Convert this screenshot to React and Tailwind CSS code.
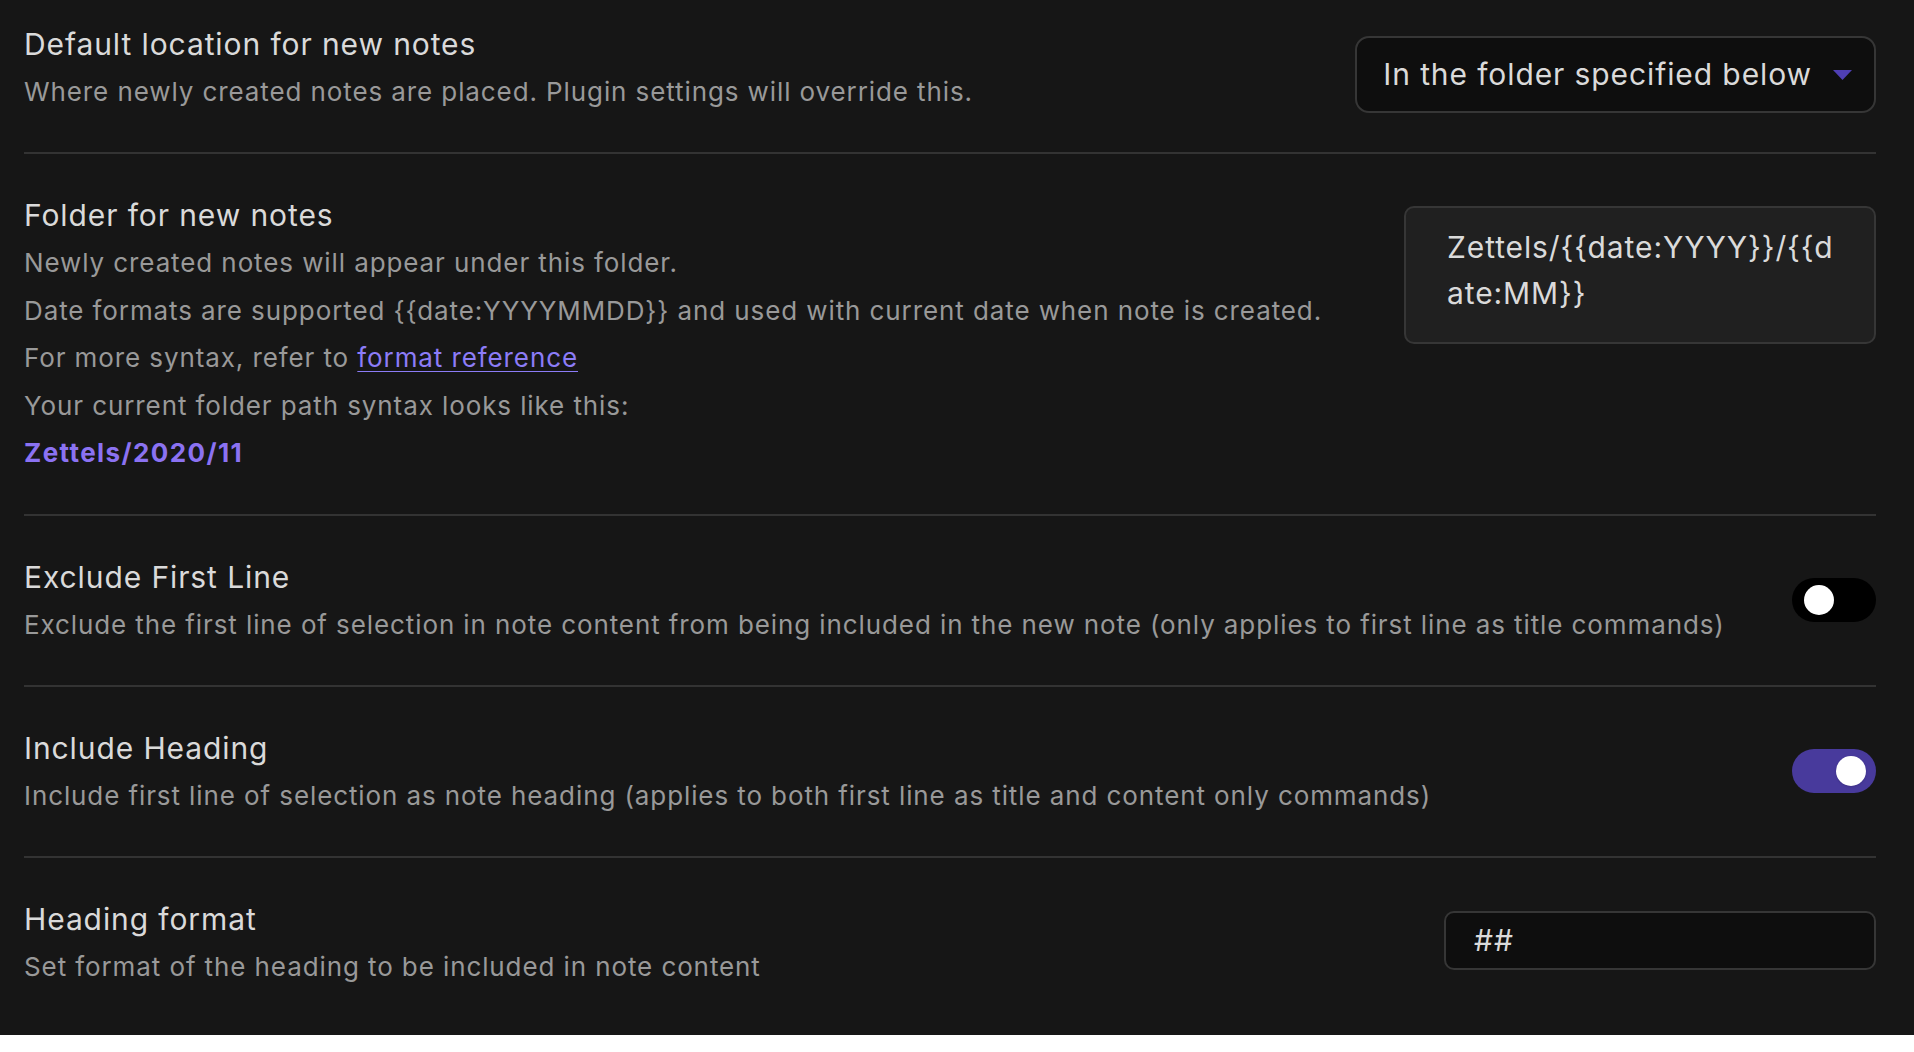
import React, { useState } from 'react';

const Toggle = ({ on, onChange }) => (
    <button
        onClick={() => onChange(!on)}
        className={`relative w-[84px] h-[44px] rounded-full shrink-0 ${on ? 'bg-[#483a9c]' : 'bg-black'}`}
    >
        <span
            className={`absolute top-[7px] w-[30px] h-[30px] rounded-full bg-white shadow ${on ? 'left-[44px]' : 'left-[12px]'}`}
        />
    </button>
);

const SettingRow = ({ title, children, control, align = 'items-center', last = false }) => (
    <div className={`flex justify-between gap-10 py-[37px] ${align} ${last ? '' : 'border-b-2 border-[#333333]'}`}>
        <div className="flex flex-col tracking-[0.9px]">
            <div className="text-[30px] leading-[48px] text-[#dadada]">{title}</div>
            <div className="text-[26px] leading-[47px] text-[#999999]">{children}</div>
        </div>
        {control}
    </div>
);

export default function App() {
    const [excludeFirst, setExcludeFirst] = useState(false);
    const [includeHeading, setIncludeHeading] = useState(true);
    const [headingFormat, setHeadingFormat] = useState('##');

    return (
        <div className="min-h-screen bg-[#161616] pl-6 pr-[38px]" style={{ fontFamily: 'Inter, "Noto Sans", sans-serif' }}>
            <div className="-mt-[17px]">
                <SettingRow
                    title="Default location for new notes"
                    align="items-start"
                    control={
                        <div className="mt-[16px] flex items-center gap-[21px] h-[77px] pl-[26px] pr-[22px] rounded-[14px] border-2 border-[#363636] bg-[#0e0e0e] text-[30px] tracking-[0.9px] text-[#dadada] shrink-0">
                            <span>In the folder specified below</span>
                            <svg width="19" height="10" viewBox="0 0 19 10">
                                <path d="M0 0 L19 0 L9.5 10 Z" fill="#4f3fb3" />
                            </svg>
                        </div>
                    }
                >
                    Where newly created notes are placed. Plugin settings will override this.
                </SettingRow>

                <SettingRow
                    title="Folder for new notes"
                    align="items-start"
                    control={
                        <div className="mt-[15px] w-[472px] h-[138px] shrink-0 rounded-[10px] border-2 border-[#363636] bg-[#202020] pl-[41px] pr-[36px] pt-[16px] text-[30px] leading-[46px] tracking-[0.9px] text-[#dadada] break-all">
                            {'Zettels/{{date:YYYY}}/{{date:MM}}'}
                        </div>
                    }
                >
                    <div className="leading-[47.6px]">Newly created notes will appear under this folder.</div>
                    <div className="leading-[47.6px]">{'Date formats are supported {{date:YYYYMMDD}} and used with current date when note is created.'}</div>
                    <div className="leading-[47.6px]">
                        For more syntax, refer to{' '}
                        <a href="#" className="text-[#8c7cf7] underline underline-offset-4 decoration-1">format reference</a>
                    </div>
                    <div className="leading-[47.6px]">Your current folder path syntax looks like this:</div>
                    <div className="leading-[47.6px] font-bold tracking-[1.4px] text-[#8b72f2]">Zettels/2020/11</div>
                </SettingRow>

                <SettingRow
                    title="Exclude First Line"
                    control={<Toggle on={excludeFirst} onChange={setExcludeFirst} />}
                >
                    Exclude the first line of selection in note content from being included in the new note (only applies to first line as title commands)
                </SettingRow>

                <SettingRow
                    title="Include Heading"
                    control={<Toggle on={includeHeading} onChange={setIncludeHeading} />}
                >
                    Include first line of selection as note heading (applies to both first line as title and content only commands)
                </SettingRow>

                <SettingRow
                    title="Heading format"
                    last
                    control={
                        <input
                            value={headingFormat}
                            onChange={(e) => setHeadingFormat(e.target.value)}
                            className="-mt-[4px] w-[432px] h-[59px] shrink-0 rounded-[10px] border-2 border-[#363636] bg-[#0e0e0e] px-[28px] text-[30px] tracking-[0.9px] text-[#dadada] outline-none"
                        />
                    }
                >
                    Set format of the heading to be included in note content
                </SettingRow>
            </div>
        </div>
    );
}
